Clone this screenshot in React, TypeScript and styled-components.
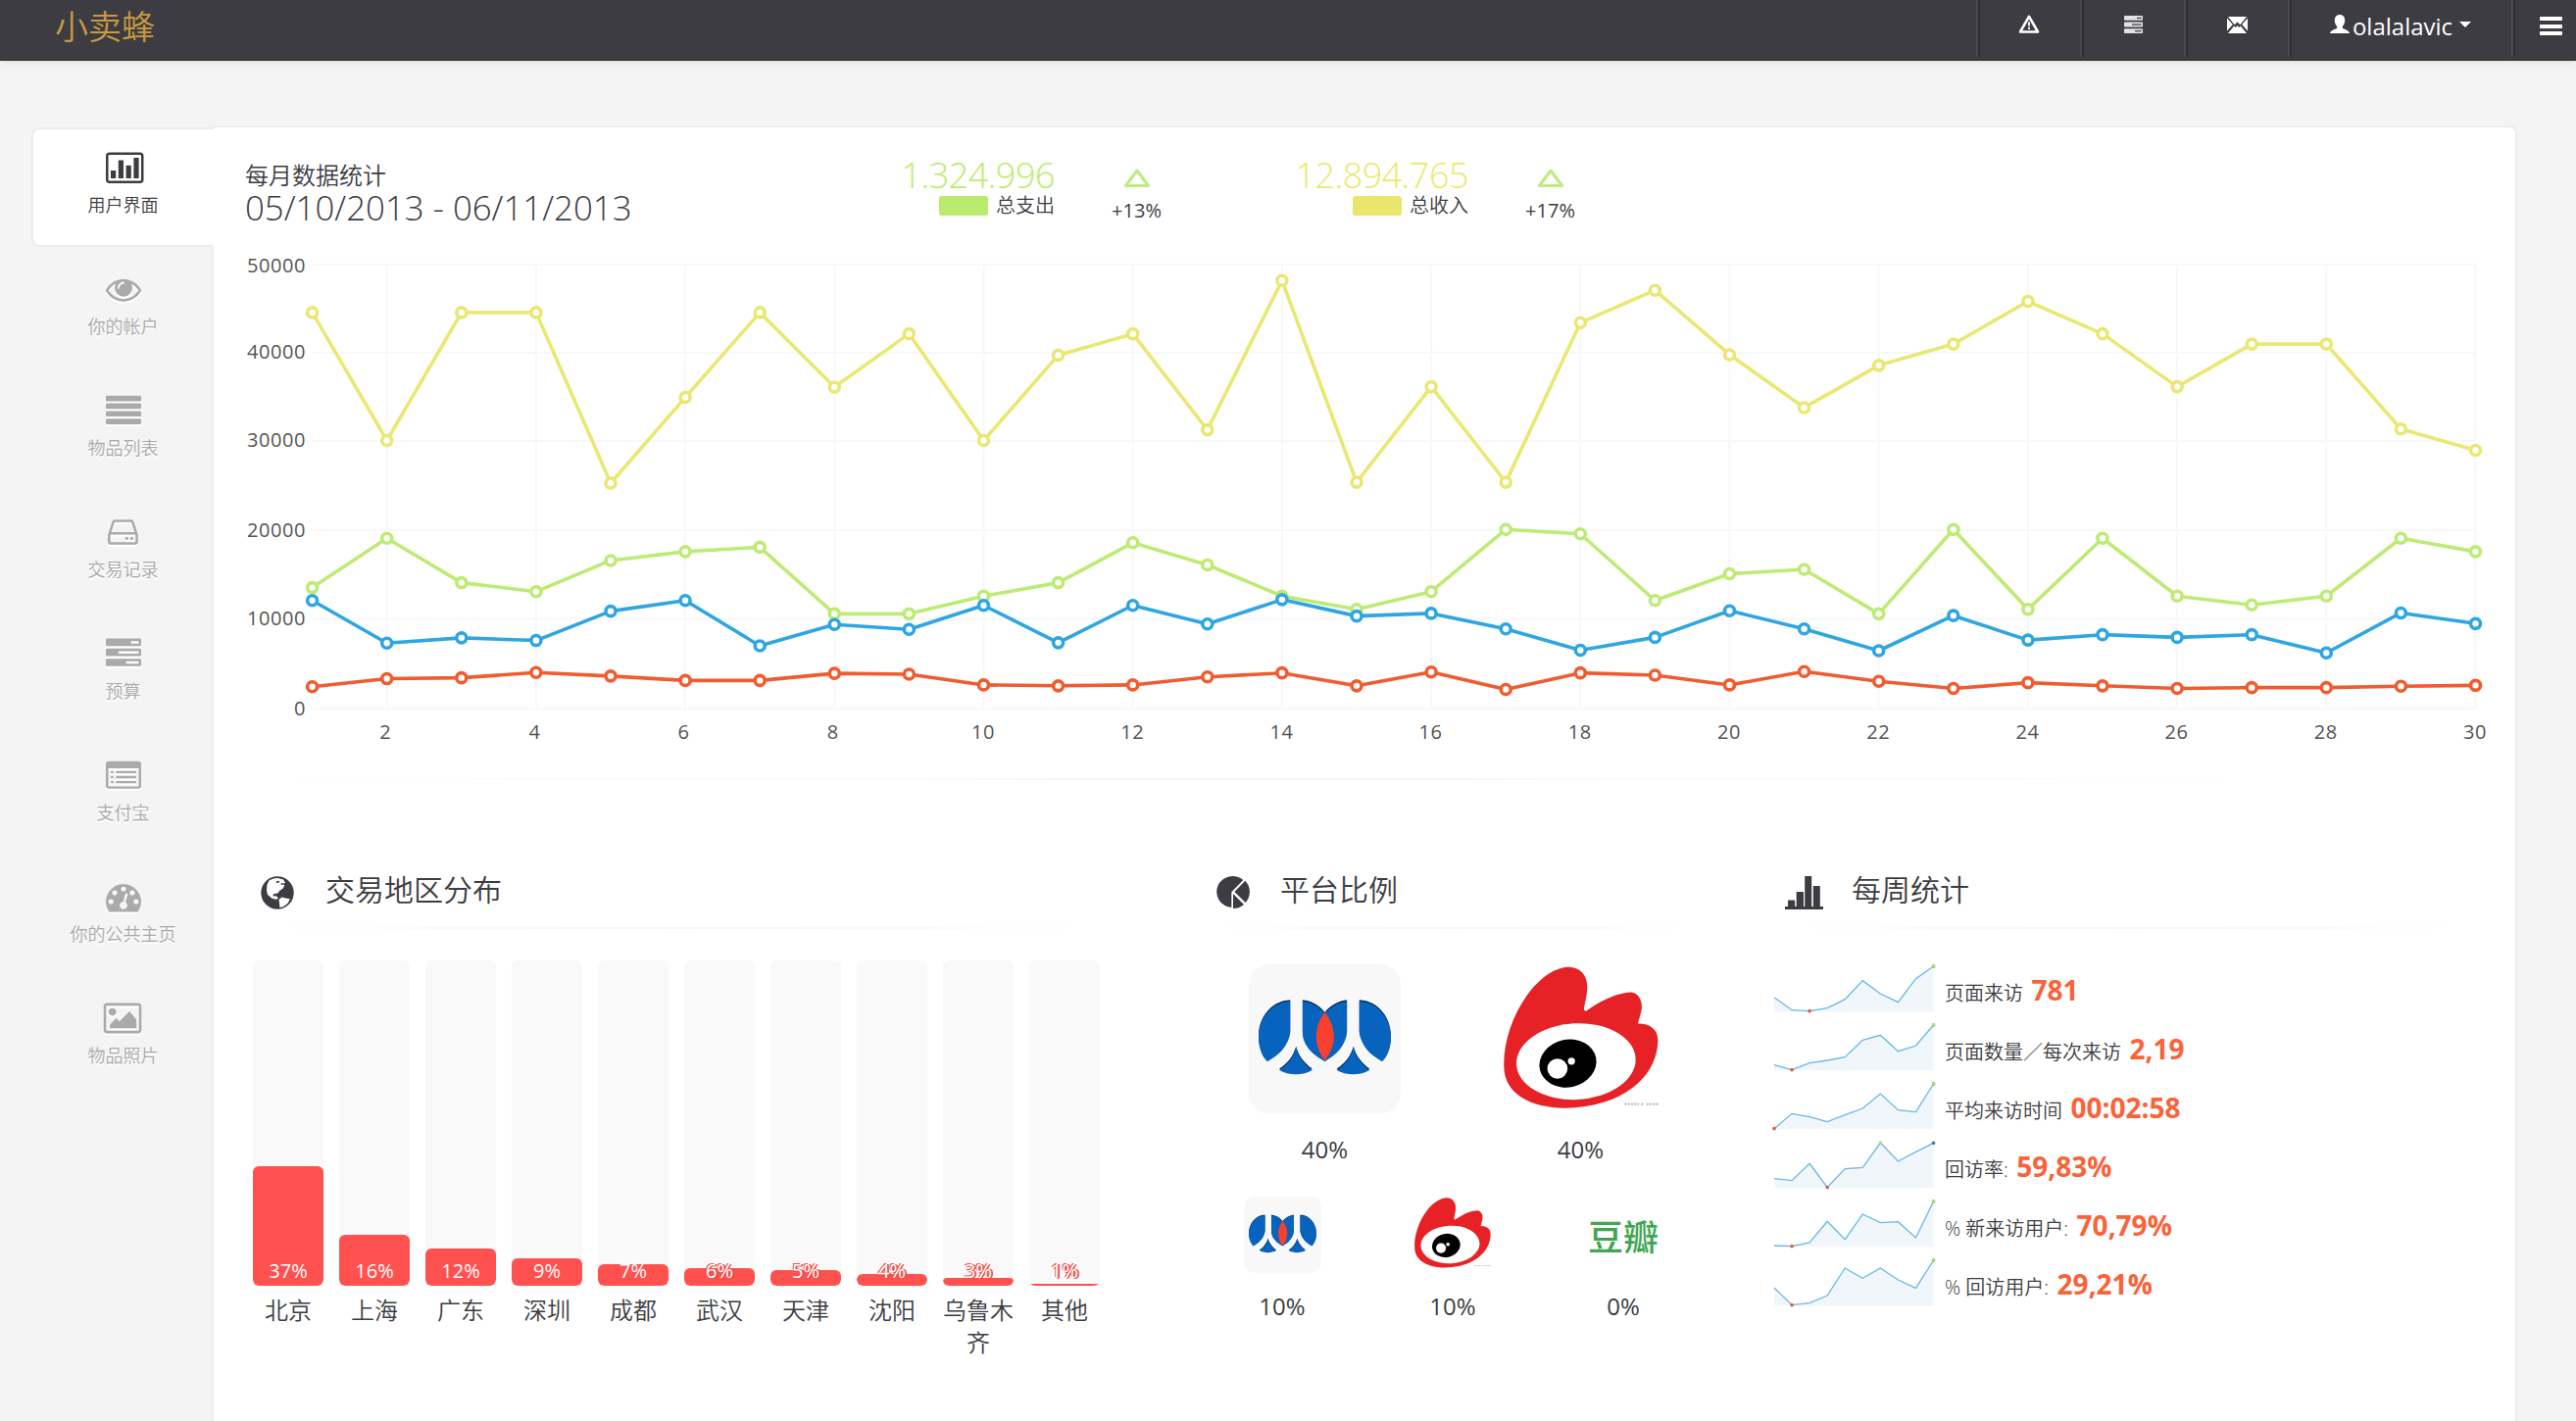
import React from 'react';
import styled, { createGlobalStyle, css } from 'styled-components';

const GlobalStyle = createGlobalStyle`
  * { box-sizing: border-box; }
  body {
    margin: 0;
    background: #f4f4f4;
    color: #3d3c42;
    font-family: 'Open Sans', 'Noto Sans CJK SC', sans-serif;
    font-weight: 400;
  }
`;

const Page = styled.div`
  width: 2628px;
  height: 1450px;
  overflow: hidden;
  display: flex;
  flex-direction: column;
`;

/* ---------- top bar ---------- */

const TopBar = styled.header`
  flex: none;
  height: 62px;
  display: flex;
  justify-content: space-between;
  background: #3d3c43;
  border-bottom: 1px solid #2d2b31;
  box-shadow: 0 1px 7px rgba(0, 0, 0, 0.1);
  padding-left: 56px;
`;

const Brand = styled.h1`
  margin: 0;
  font-size: 34px;
  line-height: 54px;
  font-weight: 350;
  color: #c99b3f;
`;

const TopNav = styled.nav`
  display: flex;
  height: 58px;
`;

const NavItem = styled.div<{ $width: number }>`
  width: ${(p) => p.$width}px;
  display: flex;
  justify-content: center;
  padding: 14px 4px 0 0;
  border-left: 2px solid #2f2e34;
  box-shadow: -2px 0 0 #4a4950;
  color: #fff;

  svg { flex: none; display: block; }
`;

const UserName = styled.span`
  font-size: 24px;
  line-height: 26px;
  margin: 0 7px 0 3px;
`;

const Caret = styled.i`
  width: 0;
  height: 0;
  margin-top: 8px;
  border: 6px solid transparent;
  border-top-color: #fff;
  border-bottom: 0;
`;

const Burger = styled.div`
  width: 23px;
  height: 19px;
  margin: 3px 0 0 14px;
  display: flex;
  flex-direction: column;
  justify-content: space-between;

  i { height: 4px; background: #fff; border-radius: 1px; }
`;

/* ---------- sidebar ---------- */

const Main = styled.main`
  flex: 1;
  display: flex;
  padding: 66px 0 0 32px;
`;

const Sidebar = styled.aside`
  width: 184px;
  padding-top: 2px;
  display: flex;
  flex-direction: column;
  gap: 2px;
`;

const Tab = styled.div<{ $active?: boolean }>`
  height: 122px;
  width: 186px;
  display: flex;
  flex-direction: column;
  align-items: center;
  padding: 21px 1px 0 0;
  border: 2px solid transparent;
  border-right: 0;
  color: #aaa;
  text-shadow: 0 2px 0 #fff;

  svg { display: block; overflow: visible; filter: drop-shadow(0 2px 0 #fff); }

  ${(p) =>
    p.$active &&
    css`
      position: relative;
      z-index: 1;
      background: #fff;
      color: #3d3c42;
      border-color: #ececec;
      border-radius: 8px 0 0 8px;

      svg { margin-left: 3px; }
    `}
`;

const TabLabel = styled.span`
  margin-top: 7px;
  font-size: 18px;
  line-height: 26px;
  font-weight: 350;
`;

/* ---------- panel ---------- */

const Panel = styled.section`
  width: 2352px;
  background: #fff;
  border: 2px solid #ececec;
  border-bottom: 0;
  border-radius: 0 8px 0 0;
  padding: 33px 0 0 29px;
`;

const Summary = styled.div`
  display: grid;
  grid-template-columns: 602px 224px 167px 255px 167px;
  height: 66px;
  padding-left: 3px;
`;

const SummaryTitle = styled.div`
  font-size: 24px;
  line-height: 32px;
  font-weight: 350;
`;

const SummaryDate = styled.div`
  font-size: 34.8px;
  line-height: 33px;
  font-weight: 300;
  white-space: nowrap;
`;

const Amount = styled.div<{ $color: string }>`
  font-size: 36px;
  line-height: 32px;
  font-weight: 300;
  letter-spacing: -0.5px;
  text-align: right;
  color: ${(p) => p.$color};
`;

const Legend = styled.div`
  display: flex;
  justify-content: flex-end;
  align-items: center;
  gap: 8px;
  font-size: 20px;
  line-height: 30px;
  font-weight: 350;
`;

const Swatch = styled.i<{ $color: string }>`
  width: 50px;
  height: 20px;
  border-radius: 3px;
  background: ${(p) => p.$color};
`;

const Trend = styled.div`
  display: flex;
  flex-direction: column;
  align-items: center;
  padding-top: 9px;
  font-size: 20px;
  line-height: 20px;

  svg { display: block; margin-bottom: 13px; }
`;

const ChartSvg = styled.svg`
  display: block;

  text {
    font-family: 'Open Sans', sans-serif;
    font-size: 20px;
    letter-spacing: 0.55px;
    fill: #545454;
  }
`;

const Rule = styled.hr`
  height: 2px;
  margin: 0;
  border: 0;
  background: linear-gradient(90deg, transparent, #f5f5f5 50%, transparent);
`;

const ChartRule = styled(Rule)`
  margin-top: 14px;
  width: 2080px;
`;

const Columns = styled.div`
  display: flex;
  padding-top: 75px;
`;

const Block = styled.div<{ $width: number; $gap?: number }>`
  width: ${(p) => p.$width}px;
  margin-right: ${(p) => p.$gap || 0}px;
`;

const BlockHead = styled.div`
  height: 75px;
  display: flex;
  align-items: flex-start;
  padding-top: 17px;
`;

const BlockIcon = styled.div`
  width: 72px;
  display: flex;
  justify-content: center;
  padding-top: 6px;

  svg { display: block; }
`;

const BlockTitle = styled.h2`
  margin: 0 0 0 13px;
  font-size: 30px;
  line-height: 40px;
  font-weight: 350;
`;

/* ---------- region bars ---------- */

const Bars = styled.div`
  display: flex;
  gap: 16px;
  padding: 32px 0 0 11px;
`;

const BarItem = styled.div`
  width: 72px;
  text-align: center;
  font-size: 24px;
  line-height: 33px;
  font-weight: 350;
`;

const Track = styled.div`
  position: relative;
  height: 332px;
  display: flex;
  align-items: flex-end;
  margin-bottom: 8px;
  border-radius: 6px;
  background: #f9f9f9;
  overflow: hidden;
`;

const Fill = styled.div`
  width: 100%;
  border-radius: 6px;
  background: #ff514f;
`;

const BarValue = styled.span<{ $outlined: boolean }>`
  position: absolute;
  left: 0;
  right: 0;
  bottom: 5px;
  font-size: 20px;
  line-height: 20px;
  font-weight: 400;
  color: #fff;
  text-shadow: ${(p) =>
    p.$outlined ? '2px 0 0 #e8514d, 1px 1px 0 #e8514d, -1px -1px 0 #e8514d' : 'none'};
`;

/* ---------- platforms ---------- */

const PlatformRow = styled.div<{ $large?: boolean }>`
  display: flex;
  padding-top: ${(p) => (p.$large ? 36 : 33)}px;
`;

const Platform = styled.div<{ $art: number; $top: number }>`
  flex: 1;
  display: flex;
  flex-direction: column;
  align-items: center;
  font-size: 24px;
  line-height: 28px;

  > div {
    height: ${(p) => p.$art}px;
    padding-top: ${(p) => p.$top}px;
  }
  svg { display: block; }
`;

const Douban = styled.div`
  color: #41a553;
  font-size: 36px;
  line-height: 36px;
  font-weight: 500;
`;

/* ---------- weekly stats ---------- */

const WeeklyList = styled.div`
  padding: 30px 0 0 6px;
`;

const WeeklyRow = styled.div`
  height: 60px;
  display: flex;
  align-items: flex-start;

  svg { display: block; overflow: visible; margin-right: 11px; }
`;

const WeeklyText = styled.div`
  padding-top: 12px;
  font-size: 20px;
  line-height: 40px;
  font-weight: 350;
  white-space: nowrap;

  b {
    margin-left: 8.5px;
    font-size: 28px;
    font-weight: 700;
    color: #f9633a;
  }
`;

/* ---------- icons ---------- */

const Fa = ({ d, w = 1792 }: { d: string; w?: number }) => (
  <svg width={(w / 1792) * 36} height={36} viewBox={`0 0 ${w} 1792`} fill="currentColor">
    <path d={d} fillRule="evenodd" />
  </svg>
);

const BarFrameIcon = () => (
  <svg width={38.5} height={36} viewBox="0 0 38.5 36">
    <rect x="1.25" y="3.75" width="36" height="29" rx="2.5" fill="none" stroke="currentColor" strokeWidth="2.5" />
    <g fill="currentColor">
      <rect x="5" y="21" width="5.2" height="8" />
      <rect x="12.8" y="10.5" width="5.2" height="18.5" />
      <rect x="20.6" y="15.8" width="5.2" height="13.2" />
      <rect x="28.4" y="8" width="5.2" height="21" />
    </g>
  </svg>
);

const LinesIcon = () => (
  <svg width={36} height={36} viewBox="0 0 36 36" fill="currentColor">
    {[2.8, 10.6, 18.4, 26.2].map((y) => (
      <rect key={y} x="0" y={y} width="36" height="5.7" rx="1.3" />
    ))}
  </svg>
);

const ListFrameIcon = () => (
  <svg width={36} height={36} viewBox="0 0 36 36" fill="currentColor">
    <path
      fillRule="evenodd"
      d="M3 3.8h30a3 3 0 0 1 3 3v22a3 3 0 0 1-3 3H3a3 3 0 0 1-3-3v-22a3 3 0 0 1 3-3zM2.5 11v17.8q0 .7.7.7h29.6q.7 0 .7-.7V11z"
    />
    {[13.7, 18.8, 23.9].map((y) => (
      <React.Fragment key={y}>
        <rect x="5" y={y} width="2.8" height="2.4" rx="0.6" />
        <rect x="10.3" y={y} width="20.7" height="2.4" rx="0.6" />
      </React.Fragment>
    ))}
  </svg>
);

const EYE =
  'M1664 960q-152-236-381-353 61 104 61 225 0 185-131.5 316.5t-316.5 131.5-316.5-131.5-131.5-316.5q0-121 61-225-229 117-381 353 133 205 333.5 326.5t434.5 121.5 434.5-121.5 333.5-326.5zm-720-384q0-20-14-34t-34-14q-125 0-214.5 89.5t-89.5 214.5q0 20 14 34t34 14 34-14 14-34q0-86 61-147t147-61q20 0 34-14t14-34zm848 384q0 34-20 69-140 230-376.5 368.5t-499.5 138.5-499.5-139-376.5-368q-20-35-20-69t20-69q140-229 376.5-368t499.5-139 499.5 139 376.5 368q20 35 20 69z';
const HDD =
  'M1040 1216q0 33-23.5 56.5t-56.5 23.5-56.5-23.5-23.5-56.5 23.5-56.5 56.5-23.5 56.5 23.5 23.5 56.5zm256 0q0 33-23.5 56.5t-56.5 23.5-56.5-23.5-23.5-56.5 23.5-56.5 56.5-23.5 56.5 23.5 23.5 56.5zm112 160v-320q0-13-9.5-22.5t-22.5-9.5h-1216q-13 0-22.5 9.5t-9.5 22.5v320q0 13 9.5 22.5t22.5 9.5h1216q13 0 22.5-9.5t9.5-22.5zm-1230-480h1180l-157-482q-4-13-16-21.5t-26-8.5h-782q-14 0-26 8.5t-16 21.5zm1358 160v320q0 66-47 113t-113 47h-1216q-66 0-113-47t-47-113v-320q0-25 16-75l197-606q17-53 63-86t101-33h782q55 0 101 33t63 86l197 606q16 50 16 75z';
const TASKS =
  'M1024 1408h640v-128h-640v128zm-384-512h1024v-128h-1024v128zm640-512h384v-128h-384v128zm512 832v256q0 26-19 45t-45 19h-1664q-26 0-45-19t-19-45v-256q0-26 19-45t45-19h1664q26 0 45 19t19 45zm0-512v256q0 26-19 45t-45 19h-1664q-26 0-45-19t-19-45v-256q0-26 19-45t45-19h1664q26 0 45 19t19 45zm0-512v256q0 26-19 45t-45 19h-1664q-26 0-45-19t-19-45v-256q0-26 19-45t45-19h1664q26 0 45 19t19 45z';
const GAUGE =
  'M384 1152q0-53-37.5-90.5t-90.5-37.5-90.5 37.5-37.5 90.5 37.5 90.5 90.5 37.5 90.5-37.5 37.5-90.5zm192-448q0-53-37.5-90.5t-90.5-37.5-90.5 37.5-37.5 90.5 37.5 90.5 90.5 37.5 90.5-37.5 37.5-90.5zm428 481l101-382q6-26-7.5-48.5t-38.5-29.5-48 6.5-30 39.5l-101 382q-60 5-107 43.5t-63 98.5q-20 77 20 146t117 89 146-20 89-117q16-60-6-117t-72-91zm660-33q0-53-37.5-90.5t-90.5-37.5-90.5 37.5-37.5 90.5 37.5 90.5 90.5 37.5 90.5-37.5 37.5-90.5zm-640-640q0-53-37.5-90.5t-90.5-37.5-90.5 37.5-37.5 90.5 37.5 90.5 90.5 37.5 90.5-37.5 37.5-90.5zm448 192q0-53-37.5-90.5t-90.5-37.5-90.5 37.5-37.5 90.5 37.5 90.5 90.5 37.5 90.5-37.5 37.5-90.5zm320 448q0 261-141 483-19 29-54 29h-1402q-35 0-54-29-141-221-141-483 0-182 71-348t191-286 286-191 348-71 348 71 286 191 191 286 71 348z';
const PICTURE =
  'M576 576q0 80-56 136t-136 56-136-56-56-136 56-136 136-56 136 56 56 136zm1024 384v448h-1344v-192l320-320 160 160 512-512zm96-704h-1600q-13 0-22.5 9.5t-9.5 22.5v1216q0 13 9.5 22.5t22.5 9.5h1600q13 0 22.5-9.5t9.5-22.5v-1216q0-13-9.5-22.5t-22.5-9.5zm160 32v1216q0 66-47 113t-113 47h-1600q-66 0-113-47t-47-113v-1216q0-66 47-113t113-47h1600q66 0 113 47t47 113z';

const WarningIcon = () => (
  <svg width={22} height={20} viewBox="0 0 22 20">
    <path d="M11 2.8 20 18.500H2z" fill="none" stroke="#fff" strokeWidth="2.600" strokeLinejoin="round" />
    <path d="M9.900 8.500h2.200l-.4 4.600h-1.400z" fill="#fff" />
    <rect x="10" y="14" width="2" height="2" fill="#fff" />
  </svg>
);

const ServerIcon = () => (
  <svg width={19} height={20} viewBox="0 0 19 20">
    {[2, 8.6, 15.2].map((y, i) => (
      <g key={y}>
        <rect x="0" y={y} width="19" height="4.8" rx="0.8" fill="#e2e2e2" />
        <rect x={[13, 8, 11][i]} y={y + 1.7} width={[4.6, 9.6, 6.6][i]} height="1.5" fill="#55545b" />
      </g>
    ))}
  </svg>
);

const MailIcon = () => (
  <svg width={21} height={20} viewBox="0 0 21 20" fill="#fff">
    <path d="M1 3h19l-6.6 8.2-2.9-2.6-2.9 2.6z" />
    <path d="M0 4.6 5.8 11 0 17.6zM21 4.6 15.2 11 21 17.6z" />
    <path d="M1 20l6.2-7.6 1.6 1.5L10.5 12l1.7 1.9 1.6-1.5L20 20z" />
  </svg>
);

const PersonIcon = () => (
  <svg width={20} height={20} viewBox="0 0 20 20" fill="#fff">
    <path d="M10 1c3.3 0 5.2 2.3 5.2 5.6 0 2.6-.9 5-2.4 6.4v1.6c0 1 6.8 1.9 7.2 5.4H0c.4-3.5 7.2-4.4 7.2-5.4V13C5.7 11.6 4.8 9.2 4.8 6.6 4.8 3.3 6.7 1 10 1z" />
  </svg>
);

const GlobeIcon = () => (
  <svg width={34} height={34} viewBox="0 0 34 34">
    <circle cx="17" cy="17" r="16.7" fill="#3d3c42" />
    <path
      d="M8.5 4.5 13 2.6l4.500-.7 5.500 1.600 2 3.200-2 1.300 1.300 1.500-1.800 3.200-3.200 2-2 2.700-4.300.8-.6 2.400 3.300-.4 2.200 2-1.600 1.600-4.800-1-4.500-3.700-1-4.400.4-5.600z"
      fill="#fff"
    />
    <path d="M15.5 5.5l3-.8 1 1.600-3.400.6zM20.500 7.500l3.200-.4-.4 1.400-2.500.4z" fill="#3d3c42" />
    <path d="M18.500 24l3-2.400 4 .8 4.300.9-2 4.200-4.800 3.700-3.600.8-.3-4z" fill="#fff" />
  </svg>
);

const PieIcon = () => (
  <svg width={35} height={33} viewBox="62 105 105 99" fill="#3d3c42">
    <path d="M111 154 147 117A49 48 0 1 0 111 201z" />
    <path d="M120 153 153 119A49 49 0 0 1 154 186z" />
    <path d="M116 159 149 192A49 49 0 0 1 116 204z" />
  </svg>
);

const HistogramIcon = () => (
  <svg width={39} height={34} viewBox="0 0 39 34" fill="#3d3c42">
    <rect x="3" y="24.5" width="7.2" height="8" rx="0.6" />
    <rect x="11.7" y="16" width="7.3" height="17" rx="0.6" />
    <rect x="20.2" y="0" width="7" height="33" rx="0.6" />
    <rect x="28.8" y="10" width="7" height="23" rx="0.6" />
    <rect x="0" y="31" width="39" height="3" />
  </svg>
);

const RENREN =
  'M290 484V580C285 620 255 650 220 668C200 650 193 620 193 593C193 540 230 487 290 484ZM328 484C355 487 380 500 396 522C412 500 440 487 464 484V580C460 620 430 650 396 668C362 650 328 620 328 580ZM502 484V580C507 620 537 650 572 668C592 650 599 620 599 593C599 540 562 487 502 484ZM308 626C315 655 335 680 358 695C330 712 285 712 256 695C282 680 300 655 308 626ZM484 626C491 655 511 680 534 695C506 712 461 712 432 695C458 680 476 655 484 626Z';

const Renren = ({ size }: { size: number }) => (
  <svg width={size} height={size * 0.983} viewBox="163 375 466 458">
    <rect x="163" y="375" width="466" height="458" rx="62" fill="#f8f8f8" />
    <path d={RENREN} fill="#fff" stroke="#fff" strokeWidth="6" />
    <path d={RENREN} fill="#0a3462" />
    <path d={RENREN} fill="#0863be" transform="translate(0 5)" />
    <path
      d="M396 522C378 545 370 570 370 597C370 625 380 650 396 670C412 650 424 625 424 597C424 570 414 545 396 522Z"
      fill="#f9402f"
    />
  </svg>
);

const Weibo = ({ size }: { size: number }) => (
  <svg width={size} height={size * 0.918} viewBox="942 380 475 436">
    <path
      d="M943 690C938 560 1030 400 1130 383C1178 376 1202 412 1198 452C1196 478 1190 495 1188 512Q1192 520 1200 514C1245 480 1300 460 1335 460C1364 465 1370 500 1363 522C1360 535 1356 545 1354 556C1388 555 1416 572 1415 608C1415 700 1335 800 1160 814C1040 822 945 780 943 690Z"
      fill="#e62226"
    />
    <ellipse cx="1164" cy="672" rx="183" ry="117" fill="#fff" transform="rotate(-3 1164 672)" />
    <ellipse cx="1139" cy="678" rx="88" ry="73" fill="#000" transform="rotate(-12 1139 678)" />
    <circle cx="1107" cy="694" r="31" fill="#fff" />
    <circle cx="1150" cy="671" r="11" fill="#fff" />
    <path d="M1313 803h44M1363 803h8M1379 803h37" stroke="#c4c4c4" strokeWidth="7" strokeDasharray="7 3" />
  </svg>
);

const Triangle = () => (
  <svg width={28} height={20} viewBox="0 0 28 20">
    <path d="M14 2 25.5 17.5H2.5z" fill="none" stroke="#bbed82" strokeWidth="3.2" strokeLinejoin="round" />
  </svg>
);

/* ---------- data ---------- */

const TABS: { label: string; icon: React.ReactNode }[] = [
  { label: '用户界面', icon: <BarFrameIcon /> },
  { label: '你的帐户', icon: <Fa d={EYE} /> },
  { label: '物品列表', icon: <LinesIcon /> },
  { label: '交易记录', icon: <Fa d={HDD} w={1536} /> },
  { label: '预算', icon: <Fa d={TASKS} /> },
  { label: '支付宝', icon: <ListFrameIcon /> },
  { label: '你的公共主页', icon: <Fa d={GAUGE} /> },
  { label: '物品照片', icon: <Fa d={PICTURE} w={1856} /> },
];

const SERIES = [
  {
    color: '#e9e872',
    values: [44.5, 30.1, 44.5, 44.5, 25.3, 34.95, 44.5, 36.1, 42.1, 30.1, 39.7, 42.1, 31.3, 48.1, 25.4, 36.15, 25.4, 43.35, 47, 39.75, 33.8, 38.55, 40.95, 45.75, 42.1, 36.15, 40.95, 40.95, 31.4, 29],
  },
  {
    color: '#bdeb74',
    values: [13.55, 19.1, 14.1, 13.1, 16.6, 17.6, 18.1, 10.6, 10.6, 12.6, 14.1, 18.6, 16.1, 12.6, 11.1, 13.1, 20.1, 19.6, 12.1, 15.1, 15.6, 10.6, 20.1, 11.1, 19.1, 12.6, 11.6, 12.6, 19.1, 17.6],
  },
  {
    color: '#2fa6e1',
    values: [12.1, 7.3, 7.9, 7.6, 10.9, 12.1, 7, 9.4, 8.85, 11.55, 7.35, 11.55, 9.45, 12.2, 10.35, 10.65, 8.9, 6.5, 7.95, 10.95, 8.9, 6.45, 10.4, 7.65, 8.25, 7.95, 8.25, 6.2, 10.7, 9.5],
  },
  {
    color: '#f05c30',
    values: [2.4, 3.3, 3.4, 4, 3.6, 3.1, 3.1, 3.9, 3.8, 2.6, 2.5, 2.6, 3.5, 3.95, 2.5, 4.05, 2.1, 3.95, 3.7, 2.6, 4.1, 3, 2.2, 2.85, 2.5, 2.2, 2.3, 2.3, 2.45, 2.55],
  },
];

const REGIONS: [string, number, number][] = [
  ['北京', 37, 122],
  ['上海', 16, 52],
  ['广东', 12, 38],
  ['深圳', 9, 28],
  ['成都', 7, 22],
  ['武汉', 6, 18],
  ['天津', 5, 16],
  ['沈阳', 4, 12],
  ['乌鲁木齐', 3, 8],
  ['其他', 1, 2],
];

const WEEKLY: { label: string; value: string; pts: number[] }[] = [
  { label: '页面来访', value: '781', pts: [95, 134, 137, 128, 101, 44, 84, 110, 38, 0] },
  { label: '页面数量／每次来访', value: '2,19', pts: [122, 137, 116, 108, 98, 46, 31, 80, 63, 0] },
  { label: '平均来访时间', value: '00:02:58', pts: [137, 91, 101, 116, 95, 75, 30, 80, 86, 0] },
  { label: '回访率:', value: '59,83%', pts: [110, 116, 64, 137, 80, 76, 0, 57, 28, 1] },
  { label: '% 新来访用户:', value: '70,79%', pts: [135, 137, 126, 61, 116, 39, 65, 62, 111, 0] },
  { label: '% 回访用户:', value: '29,21%', pts: [84, 137, 131, 108, 24, 55, 24, 60, 85, 0] },
];

/* ---------- charts ---------- */

const px = (day: number) => 71.6 + (day - 1) * 76.1;
const py = (thousands: number) => 493.5 - thousands * 9.07;

const GRID: [value: number, line: number, baseline: number][] = [
  [50000, 41, 49],
  [40000, 131, 137],
  [30000, 221, 227],
  [20000, 312, 319],
  [10000, 402.5, 409],
  [0, 494, 501],
];

const MonthlyChart = () => (
  <ChartSvg width={2313} height={551} viewBox="0 0 2313 551">
    {GRID.map(([value, line, baseline]) => (
      <g key={value}>
        <line x1={px(1)} x2={px(30)} y1={line} y2={line} stroke="#f8f8f8" strokeWidth="2" />
        <text x="65" y={baseline} textAnchor="end">
          {value}
        </text>
      </g>
    ))}
    {Array.from({ length: 15 }, (_, i) => (i + 1) * 2).map((d) => (
      <g key={d}>
        <line x1={px(d)} x2={px(d)} y1={41} y2={494} stroke="#f8f8f8" strokeWidth="2" />
        <text x={px(d) - (d < 10 ? 1.5 : 0.5)} y="524.5" textAnchor="middle">
          {d}
        </text>
      </g>
    ))}
    {SERIES.map((s) => (
      <g key={s.color} stroke={s.color} strokeWidth="3.6">
        <polyline fill="none" strokeLinejoin="round" points={s.values.map((v, i) => `${px(i + 1)},${py(v)}`).join(' ')} />
        {s.values.map((v, i) => (
          <circle key={i} cx={px(i + 1)} cy={py(v)} r="5" fill="#fff" />
        ))}
      </g>
    ))}
  </ChartSvg>
);

const Sparkline = ({ pts }: { pts: number[] }) => {
  const xy = pts.map((p, i) => [i * 18.06, p / 3 + 8]);
  const line = xy.map((p) => p.join(',')).join(' ');
  const low = pts.indexOf(Math.max(...pts));
  const high = pts.indexOf(Math.min(...pts));
  const last = pts.length - 1;
  return (
    <svg width={163} height={55} viewBox="0 0 163 55">
      <polygon points={`0,54.3 ${line} 162.6,54.3`} fill="#f0f6f9" />
      <polyline points={line} fill="none" stroke="#66b8e6" strokeWidth="1.3" />
      <circle cx={xy[last][0]} cy={xy[last][1]} r="1.8" fill="#3f7d78" />
      <circle cx={xy[low][0]} cy={xy[low][1]} r="1.8" fill="#e55b3c" />
      <circle cx={xy[high][0]} cy={xy[high][1]} r="1.8" fill="#b0dc70" />
    </svg>
  );
};

const Heading = ({ icon, title }: { icon: React.ReactNode; title: string }) => (
  <>
    <BlockHead>
      <BlockIcon>{icon}</BlockIcon>
      <BlockTitle>{title}</BlockTitle>
    </BlockHead>
    <Rule />
  </>
);

export default function App() {
  return (
    <Page>
      <GlobalStyle />
      <TopBar>
        <Brand>小卖蜂</Brand>
        <TopNav>
          <NavItem $width={106}><WarningIcon /></NavItem>
          <NavItem $width={106}><ServerIcon /></NavItem>
          <NavItem $width={106}><MailIcon /></NavItem>
          <NavItem $width={228}>
            <PersonIcon />
            <UserName>olalalavic</UserName>
            <Caret />
          </NavItem>
          <NavItem $width={64}>
            <Burger><i /><i /><i /></Burger>
          </NavItem>
        </TopNav>
      </TopBar>

      <Main>
        <Sidebar>
          {TABS.map((t, i) => (
            <Tab key={t.label} $active={i === 0}>
              {t.icon}
              <TabLabel>{t.label}</TabLabel>
            </Tab>
          ))}
        </Sidebar>

        <Panel>
          <Summary>
            <div>
              <SummaryTitle>每月数据统计</SummaryTitle>
              <SummaryDate>05/10/2013 - 06/11/2013</SummaryDate>
            </div>
            <div>
              <Amount $color="#bbeb6c">1.324.996</Amount>
              <Legend><Swatch $color="#bbeb6c" />总支出</Legend>
            </div>
            <Trend><Triangle />+13%</Trend>
            <div>
              <Amount $color="#eae96b">12.894.765</Amount>
              <Legend><Swatch $color="#eae66b" />总收入</Legend>
            </div>
            <Trend><Triangle />+17%</Trend>
          </Summary>
          <MonthlyChart />
          <ChartRule />

          <Columns>
            <Block $width={894} $gap={80}>
              <Heading icon={<GlobeIcon />} title="交易地区分布" />
              <Bars>
                {REGIONS.map(([name, pct, height]) => (
                  <BarItem key={name}>
                    <Track>
                      <Fill style={{ height }} />
                      <BarValue $outlined={pct < 7}>{pct}%</BarValue>
                    </Track>
                    {name}
                  </BarItem>
                ))}
              </Bars>
            </Block>

            <Block $width={522} $gap={61}>
              <Heading icon={<PieIcon />} title="平台比例" />
              <PlatformRow $large>
                <Platform $art={175} $top={0}><div><Renren size={155} /></div>40%</Platform>
                <Platform $art={175} $top={2}><div><Weibo size={158} /></div>40%</Platform>
              </PlatformRow>
              <PlatformRow>
                <Platform $art={99} $top={1}><div><Renren size={79} /></div>10%</Platform>
                <Platform $art={99} $top={2}><div><Weibo size={78} /></div>10%</Platform>
                <Platform $art={99} $top={25}><div><Douban>豆瓣</Douban></div>0%</Platform>
              </PlatformRow>
            </Block>

            <Block $width={728}>
              <Heading icon={<HistogramIcon />} title="每周统计" />
              <WeeklyList>
                {WEEKLY.map((w) => (
                  <WeeklyRow key={w.label}>
                    <Sparkline pts={w.pts} />
                    <WeeklyText>
                      {w.label}
                      <b>{w.value}</b>
                    </WeeklyText>
                  </WeeklyRow>
                ))}
              </WeeklyList>
            </Block>
          </Columns>
        </Panel>
      </Main>
    </Page>
  );
}
